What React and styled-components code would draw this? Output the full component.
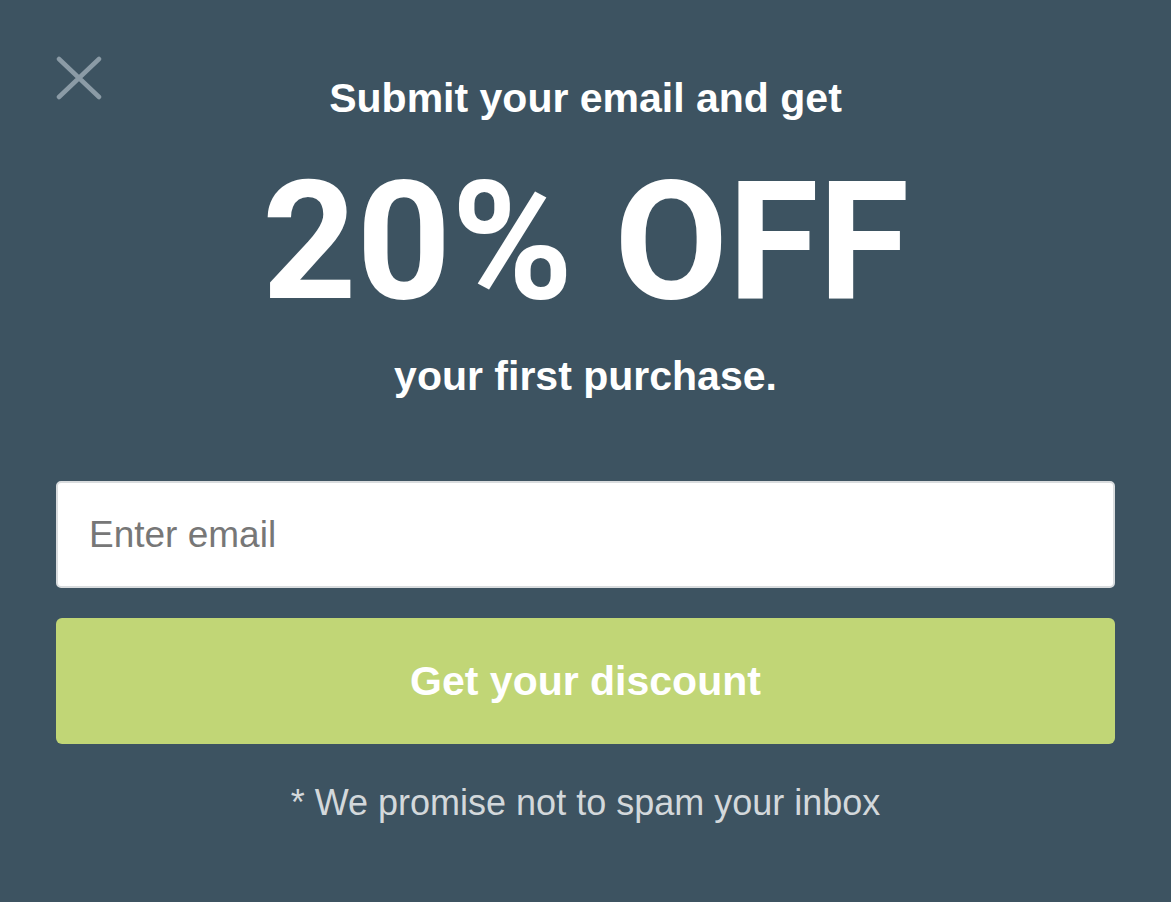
import React from 'react';
import styled, { createGlobalStyle } from 'styled-components';

const GlobalStyle = createGlobalStyle`
  html, body {
    margin: 0;
    padding: 0;
    background: #3d5361;
  }
  body {
    font-family: "Liberation Sans", Arial, sans-serif;
  }
`;

const Modal = styled.div`
  position: relative;
  width: 1171px;
  height: 902px;
  box-sizing: border-box;
  padding: 74px 56px 0;
  display: flex;
  flex-direction: column;
  align-items: center;
  background: #3d5361;
`;

const CloseButton = styled.button`
  position: absolute;
  top: 56px;
  left: 56px;
  width: 46px;
  height: 46px;
  padding: 0;
  border: 0;
  background: transparent;
  cursor: pointer;
`;

const Lead = styled.h2`
  margin: 0;
  font-size: 41px;
  line-height: 48px;
  font-weight: 700;
  color: #fff;
  text-align: center;
`;

const Offer = styled.div`
  margin-top: 40px;
  font-family: Roboto, "DejaVu Sans Condensed", sans-serif;
  font-size: 165px;
  line-height: 160px;
  font-weight: 700;
  color: #fff;
  letter-spacing: 0;
  text-align: center;
`;

const Tail = styled(Lead)`
  margin-top: 30px;
`;

const Form = styled.form`
  width: 100%;
  margin-top: 81px;
  display: flex;
  flex-direction: column;
  gap: 30px;
`;

const EmailInput = styled.input`
  box-sizing: border-box;
  width: 100%;
  height: 107px;
  padding: 0 31px;
  border: 2px solid #d9dcde;
  border-radius: 5px;
  background: #fff;
  font-family: "Liberation Sans", Arial, sans-serif;
  font-size: 37px;
  color: #333;
  outline: none;

  &::placeholder {
    color: #777;
  }
`;

const SubmitButton = styled.button`
  width: 100%;
  height: 126px;
  border: 0;
  border-radius: 6px;
  background: #c1d676;
  color: #fff;
  font-family: "Liberation Sans", Arial, sans-serif;
  font-size: 41px;
  font-weight: 700;
  cursor: pointer;
`;

const Note = styled.p`
  margin: 38px 0 0;
  font-size: 36px;
  color: #d3d8db;
  text-align: center;
`;

const CloseIcon = () => (
  <svg width="46" height="46" viewBox="0 0 46 46">
    <path d="M3 3 L43 41 M43 3 L3 41" stroke="#8b9ba6" strokeWidth="4.5" strokeLinecap="round" fill="none" />
  </svg>
);

const App = () => (
  <>
    <GlobalStyle />
    <Modal>
      <CloseButton aria-label="Close">
        <CloseIcon />
      </CloseButton>
      <Lead>Submit your email and get</Lead>
      <Offer>20% OFF</Offer>
      <Tail>your first purchase.</Tail>
      <Form onSubmit={e => e.preventDefault()}>
        <EmailInput type="email" placeholder="Enter email" />
        <SubmitButton type="submit">Get your discount</SubmitButton>
      </Form>
      <Note>* We promise not to spam your inbox</Note>
    </Modal>
  </>
);

export default App;
